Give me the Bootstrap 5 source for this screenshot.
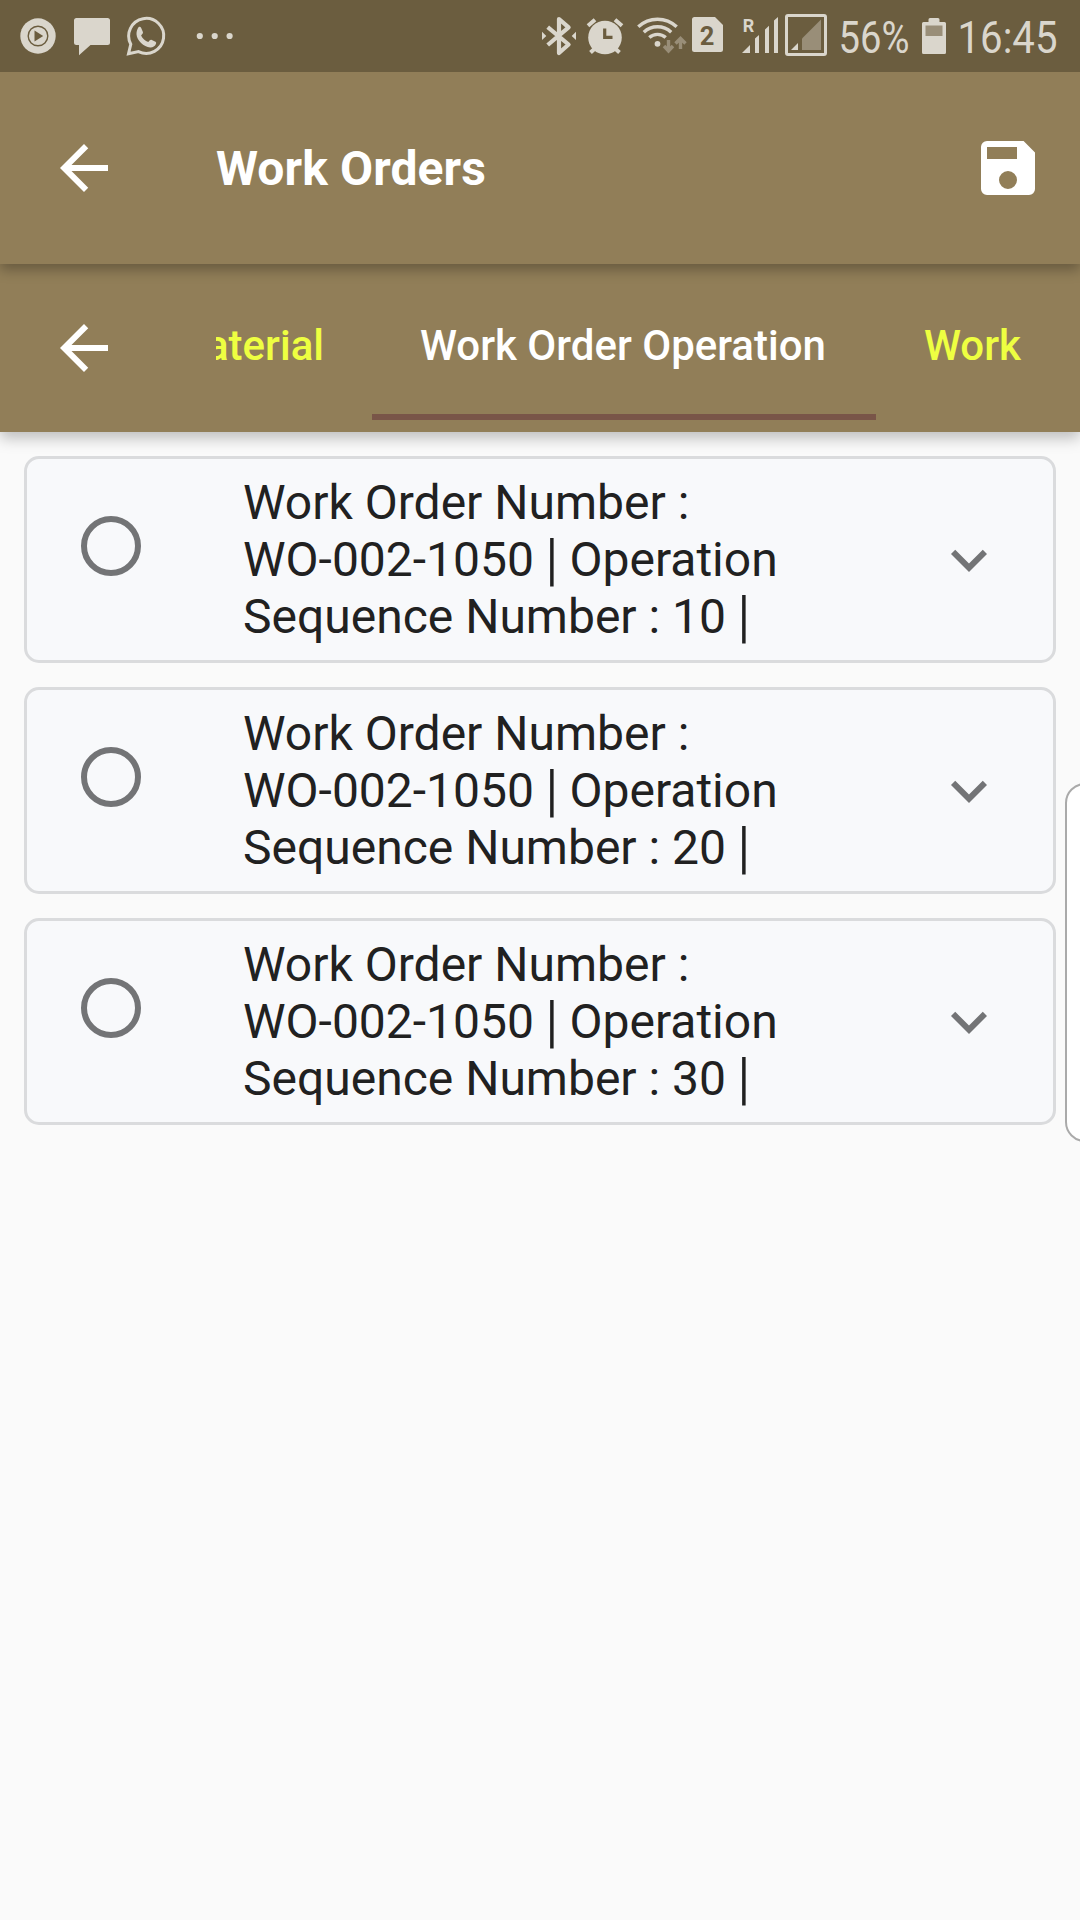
<!DOCTYPE html>
<html lang="en">
<head>
<meta charset="utf-8">
<meta name="viewport" content="width=device-width, initial-scale=1">
<title>Work Orders</title>
<link href="https://cdn.jsdelivr.net/npm/bootstrap@5.3.0/dist/css/bootstrap.min.css" rel="stylesheet">
<style>
  body { font-family: Roboto, "Liberation Sans", sans-serif; background: #fafafa; color: #212121; height: 1920px; overflow: hidden; }
  svg { display: block; flex: none; }
  .status-strip { height: 72px; background: #6b5d3f; color: #dad6cc; z-index: 3; }
  .app-head { height: 192px; background: #917e58; z-index: 2; padding: 0 36px 0 48px; box-shadow: 0 6px 12px rgba(0,0,0,.28); }
  .app-head h1 { font-size: 48px; line-height: 56px; font-weight: 700; margin-left: 96px; padding-top: 2px; letter-spacing: .1px; }
  .tab-head { height: 168px; background: #917e58; z-index: 1; padding: 0 48px; box-shadow: 0 6px 14px rgba(0,0,0,.25); }
  .tab-strip { margin-left: 96px; overflow: hidden; height: 168px; font-size: 42px; line-height: 50px; font-weight: 500; }
  .tab-strip .nav-link { flex: none; padding: 57px 48px 0; height: 156px; color: #eeff41; white-space: nowrap; border-bottom: 6px solid transparent; }
  .tab-strip .nav-link.active { color: #fff; border-color: #795548; width: 504px; }
  .tab-strip .tab-before { width: 156px; display: flex; justify-content: flex-end; }
  .orders { padding: 24px; gap: 24px; }
  .order-item { height: 207px; border: 3px solid #dadbdd; border-radius: 15px; background: #f8f9fb; padding: 0 48px 0 54px; }
  .order-item .form-check-input { width: 60px; height: 60px; border: 6px solid #737476; background-color: transparent; margin: 57px 0 0; }
  .order-text { font-size: 48px; line-height: 57px; margin: 15px 0 0 102px; width: 600px; }
  .bar { display: inline-block; transform: translateY(.5px) scaleY(1.18); }
  .chev { margin: 65px 0 0 auto; color: #737476; }
  .edge-handle { position: absolute; left: 1065px; top: 783px; width: 40px; height: 359px; border: 2px solid #aaa; border-radius: 20px; background: #fff; }
</style>
<script src="https://cdn.jsdelivr.net/npm/bootstrap@5.3.0/dist/js/bootstrap.bundle.min.js"></script>
</head>
<body class="position-relative">
<div class="status-strip d-flex justify-content-between position-relative">
  <div class="d-flex">
    <svg width="62" height="72" viewBox="0 0 62 72"><circle cx="38" cy="36" r="17.7" fill="currentColor"/><circle cx="38" cy="36" r="9.8" fill="none" stroke="#6b5d3f" stroke-width="1.4"/><path d="M34.5 30.5v11l8.7-5.5z" fill="#6b5d3f"/></svg>
    <svg width="58" height="72" viewBox="62 0 58 72"><path fill="currentColor" d="M76.500 18h31a2.500 2.500 0 0 1 2.500 2.500v22a2.500 2.500 0 0 1-2.500 2.500H90.500L79 55.300V45h-2.500a2.500 2.500 0 0 1-2.500-2.500v-22a2.500 2.500 0 0 1 2.500-2.500z"/></svg>
    <svg width="60" height="72" viewBox="120 0 60 72"><path d="M130.800 44.200A17.500 17.500 0 1 1 138.500 51.600L128.500 53.700z" fill="none" stroke="currentColor" stroke-width="3"/><path fill="currentColor" d="M138.500 27.200c.8-.6 2.200-.4 2.700.7l1.700 4.100c.3.900-.2 1.700-1.800 3.400 1.500 3.200 4 5.500 7.200 6.700 1.500-2 2.200-2.700 3-2.400l4.200 2c.8.500.8 1.200.4 2.400-.8 2.300-3.500 3.600-5.700 3.400-6.500-.7-13.200-6.700-13.700-13.200-.1-2.700.7-5.500 2-7.100z"/></svg>
    <svg width="70" height="72" viewBox="180 0 70 72" fill="currentColor"><circle cx="199.800" cy="36" r="3.100"/><circle cx="214.700" cy="36" r="3.100"/><circle cx="229.600" cy="36" r="3.100"/></svg>
  </div>
  <div class="d-flex">
    <svg width="52" height="72" viewBox="530 0 52 72"><path fill="none" stroke="currentColor" stroke-width="4.200" stroke-linejoin="round" d="M547.700 27.200L568.600 44.500L559 53V19L568.600 27.300L547.700 45"/><path fill="currentColor" d="M542 31.800l4.300 4.100-4.300 4.100zM576 31.800v8.200l-4.300-4.100z"/></svg>
    <svg width="50" height="72" viewBox="582 0 50 72"><circle cx="605" cy="37.500" r="16.800" fill="currentColor"/><path fill="none" stroke="currentColor" stroke-width="4" d="M588 25.800l7-6M622 25.800l-7-6M596 47.500l-5.500 5M614 47.500l5.500 5"/><path fill="none" stroke="#6b5d3f" stroke-width="3.200" d="M604.700 28.500v8.900h7.800"/></svg>
    <svg width="56" height="72" viewBox="632 0 56 72"><g fill="none" stroke="currentColor" stroke-width="3.400"><path d="M638.300 26.800a28 28 0 0 1 38.400 0M643.800 32.200a20 20 0 0 1 27.400 0M649.300 37.600a12 12 0 0 1 16.400 0"/></g><circle cx="657.500" cy="43.800" r="2.900" fill="currentColor"/><g stroke="#998e78" stroke-width="3.400" fill="none"><path d="M668.500 40v11M664 46l4.500 5 4.500-5M680.500 49V38.500M675.500 43.500l5-5 5 5"/></g></svg>
    <svg width="46" height="72" viewBox="688 0 46 72"><path fill="currentColor" d="M694.500 17h20.500l8 8v24.500a2.500 2.500 0 0 1-2.500 2.500h-26a2.500 2.500 0 0 1-2.500-2.500v-30a2.500 2.500 0 0 1 2.500-2.500z"/><text x="707" y="45" text-anchor="middle" font-size="25.500" font-weight="700" fill="#6b5d3f">2</text></svg>
    <svg width="48" height="72" viewBox="734 0 48 72" fill="currentColor"><text x="742.800" y="32.300" font-size="17.500" font-weight="700" textLength="11.500" lengthAdjust="spacingAndGlyphs">R</text><path d="M742 53l8-8v8zM755 53V38.500l4-3.500v18zM765 53V29.500l4-3.700V53zM774 53V20.500l4-3.500v36z"/></svg>
    <svg width="52" height="72" viewBox="782 0 52 72"><rect x="786.500" y="15.500" width="39" height="39" rx="1.500" fill="none" stroke="currentColor" stroke-width="3"/><path fill="#998e78" d="M802 50V38.500L821 19.500V50z"/><path fill="currentColor" d="M791 50l7-7v7z"/></svg>
    <svg width="82" height="72" viewBox="834 0 82 72"><text x="838.500" y="53" font-size="45" textLength="71" lengthAdjust="spacingAndGlyphs" fill="currentColor">56%</text></svg>
    <svg width="38" height="72" viewBox="916 0 38 72"><path fill="currentColor" d="M923.500 22h5v-2.500a1.500 1.500 0 0 1 1.500-1.500h8a1.500 1.500 0 0 1 1.500 1.500V22h5a1.500 1.500 0 0 1 1.500 1.500v29a1.500 1.500 0 0 1-1.500 1.500h-21a1.500 1.500 0 0 1-1.500-1.500v-29a1.500 1.500 0 0 1 1.500-1.500z"/><path fill="#998e78" d="M925.500 25.500h17V36h-17z"/></svg>
    <svg width="126" height="72" viewBox="954 0 126 72"><text x="957.500" y="53" font-size="45" textLength="100" lengthAdjust="spacingAndGlyphs" fill="currentColor">16:45</text></svg>
  </div>
</div>

<header class="app-head d-flex align-items-center position-relative text-white">
  <svg width="72" height="72" viewBox="0 0 24 24" fill="currentColor"><path d="M20 11H7.830l5.590-5.590L12 4l-8 8 8 8 1.410-1.410L7.830 13H20v-2z"/></svg>
  <h1 class="mb-0">Work Orders</h1>
  <svg class="ms-auto" width="72" height="72" viewBox="0 0 24 24" fill="currentColor" fill-rule="evenodd"><path d="M17.200 3H5a2 2 0 0 0-2 2v14a2 2 0 0 0 2 2h14a2 2 0 0 0 2-2V6.800zM12 19a3 3 0 1 1 0-6 3 3 0 0 1 0 6zM15 9H5V5h10z"/></svg>
</header>

<div class="tab-head d-flex align-items-center position-relative text-white">
  <svg width="72" height="72" viewBox="0 0 24 24" fill="currentColor"><path d="M20 11H7.830l5.590-5.590L12 4l-8 8 8 8 1.410-1.410L7.830 13H20v-2z"/></svg>
  <nav class="tab-strip nav flex-nowrap flex-grow-1">
    <a class="nav-link tab-before"><span>Material</span></a>
    <a class="nav-link active">Work Order Operation</a>
    <a class="nav-link">Work</a>
  </nav>
</div>

<main class="orders d-flex flex-column">
  <div class="order-item d-flex align-items-start">
    <input class="form-check-input" type="radio" name="op" aria-label="Operation 10">
    <div class="order-text">Work Order Number :<br>WO-002-1050 <span class="bar">|</span> Operation<br>Sequence Number : 10 <span class="bar">|</span></div>
    <svg class="chev" width="72" height="72" viewBox="0 0 24 24" fill="currentColor"><path d="M16.590 8.590L12 13.170 7.410 8.590 6 10l6 6 6-6z"/></svg>
  </div>
  <div class="order-item d-flex align-items-start">
    <input class="form-check-input" type="radio" name="op" aria-label="Operation 20">
    <div class="order-text">Work Order Number :<br>WO-002-1050 <span class="bar">|</span> Operation<br>Sequence Number : 20 <span class="bar">|</span></div>
    <svg class="chev" width="72" height="72" viewBox="0 0 24 24" fill="currentColor"><path d="M16.590 8.590L12 13.170 7.410 8.590 6 10l6 6 6-6z"/></svg>
  </div>
  <div class="order-item d-flex align-items-start">
    <input class="form-check-input" type="radio" name="op" aria-label="Operation 30">
    <div class="order-text">Work Order Number :<br>WO-002-1050 <span class="bar">|</span> Operation<br>Sequence Number : 30 <span class="bar">|</span></div>
    <svg class="chev" width="72" height="72" viewBox="0 0 24 24" fill="currentColor"><path d="M16.590 8.590L12 13.170 7.410 8.590 6 10l6 6 6-6z"/></svg>
  </div>
</main>
<div class="edge-handle"></div>
</body>
</html>
